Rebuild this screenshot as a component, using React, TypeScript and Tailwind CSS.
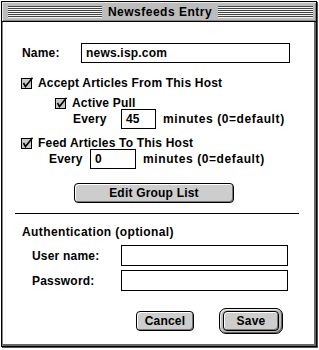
import React from "react";

function Check() {
  return (
    <svg width="13" height="12" viewBox="0 0 13 12" className="shrink-0">
      <rect x="0.5" y="1.5" width="10" height="10" fill="#c8c8c8" stroke="#000" />
      <polyline points="2.5,6 4.5,9.5 11.5,0.8" fill="none" stroke="#000" strokeWidth="1.6" />
    </svg>
  );
}

function Stripes({ className }: { className: string }) {
  return (
    <div
      className={
        "h-[12px] bg-[image:repeating-linear-gradient(to_bottom,#444_0px,#444_1px,#f4f4f4_1px,#f4f4f4_2px)] " +
        className
      }
    />
  );
}

function Field({ value, className }: { value?: string; className: string }) {
  return (
    <div className={"border border-black bg-white flex items-center pl-[4px] " + className}>
      {value}
    </div>
  );
}

function MacButton({ label, className }: { label: string; className: string }) {
  return (
    <div
      className={
        "h-[20px] rounded-[4px] border border-black bg-[#cdcdcd] flex items-center justify-center shadow-[inset_1px_1px_0_#fff,inset_-1px_-1px_0_#777] " +
        className
      }
    >
      {label}
    </div>
  );
}

export default function App() {
  return (
    <div className="w-[319px] h-[350px] bg-white font-['Liberation_Sans',Arial,sans-serif] text-[12px] tracking-[0.2px] font-bold text-black leading-none">
      <div className="ml-[1px] mt-[1px] w-[316px] h-[346px] border border-black shadow-[1px_1px_0_#555] flex flex-col">
        {/* title bar */}
        <div className="h-[20px] bg-[#bcbcbc] border-b border-black flex items-center shadow-[inset_1px_1px_0_#e8e8e8,inset_-1px_-1px_0_#888]">
          <Stripes className="ml-[6px] w-[94px]" />
          <div className="w-[116px] text-center tracking-[0.5px]">Newsfeeds Entry</div>
          <Stripes className="w-[95px]" />
        </div>

        <div className="flex-1 flex flex-col border-l border-l-[#888] border-r-2 border-r-[#666] border-b-2 border-b-[#666]">
          {/* name */}
          <div className="mt-[21px] h-[20px] flex items-center">
            <div className="ml-[19px] w-[59px]">Name:</div>
            <Field value="news.isp.com" className="w-[209px] h-[20px]" />
          </div>

          {/* accept */}
          <div className="mt-[14px] h-[12px] flex items-center">
            <div className="ml-[18px] flex items-center gap-[4px]">
              <Check />
              <span>Accept Articles From This Host</span>
            </div>
          </div>

          {/* active pull */}
          <div className="mt-[8px] h-[12px] flex items-center">
            <div className="ml-[52px] flex items-center gap-[4px]">
              <Check />
              <span>Active Pull</span>
            </div>
          </div>

          {/* every 45 */}
          <div className="h-[20px] flex items-center">
            <div className="ml-[70px] w-[48px]">Every</div>
            <Field value="45" className="w-[35px] h-[20px]" />
            <div className="ml-[7px] tracking-[0.6px]">minutes (0=default)</div>
          </div>

          {/* feed */}
          <div className="mt-[8px] h-[12px] flex items-center">
            <div className="ml-[18px] flex items-center gap-[4px]">
              <Check />
              <span>Feed Articles To This Host</span>
            </div>
          </div>

          {/* every 0 */}
          <div className="h-[20px] flex items-center">
            <div className="ml-[46px] w-[41px]">Every</div>
            <Field value="0" className="w-[46px] h-[20px]" />
            <div className="ml-[7px] tracking-[0.6px]">minutes (0=default)</div>
          </div>

          {/* edit group list */}
          <div className="mt-[14px] flex">
            <MacButton label="Edit Group List" className="ml-[71px] w-[160px]" />
          </div>

          <div className="mt-[10px] ml-[12px] w-[284px] h-px bg-black" />

          <div className="mt-[11px] h-[14px] flex items-center pl-[19px] tracking-[0.4px]">Authentication (optional)</div>

          <div className="mt-[6px] h-[21px] flex items-center">
            <div className="ml-[29px] w-[89px]">User name:</div>
            <Field className="w-[167px] h-[21px]" />
          </div>
          <div className="mt-[4px] h-[21px] flex items-center">
            <div className="ml-[29px] w-[89px]">Password:</div>
            <Field className="w-[167px] h-[21px]" />
          </div>

          {/* buttons */}
          <div className="mt-[17px] h-[26px] flex items-center">
            <MacButton label="Cancel" className="ml-[133px] w-[58px]" />
            <div className="ml-[25px] w-[64px] h-[26px] rounded-[7px] border border-black bg-[#bdbdbd] flex items-center justify-center shadow-[inset_1px_1px_0_#eee,inset_-1px_-1px_0_#666]">
              <MacButton label="Save" className="w-[56px]" />
            </div>
          </div>
        </div>
      </div>
    </div>
  );
}
